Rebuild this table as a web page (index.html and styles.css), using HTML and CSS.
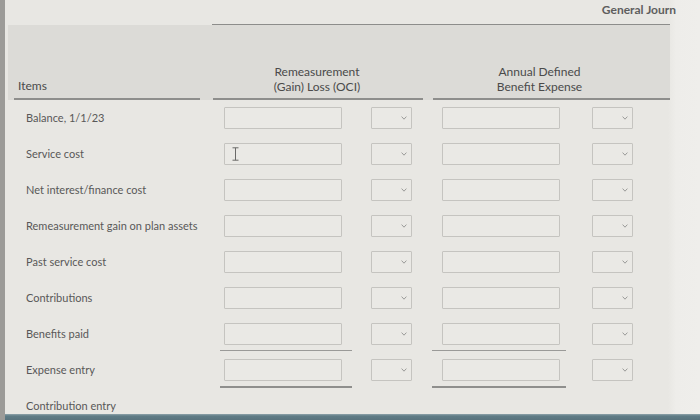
FILE: index.html
```html
<!DOCTYPE html>
<html lang="en">
<head>
    <meta charset="UTF-8">
    <meta name="viewport" content="width=device-width, initial-scale=1.0">
    <title>General Journal - Pension Worksheet</title>
    <link rel="stylesheet" href="styles.css">
</head>
<body>

<div class="topbar">
    <span class="title">General Journ</span>
</div>

<div class="sheet">
    <div class="head">
        <div class="hcell items">Items</div>
        <div class="hcell oci">Remeasurement<br>(Gain) Loss (OCI)</div>
        <div class="hcell expense">Annual Defined<br>Benefit Expense</div>
    </div>

    <div id="rows">
        <!-- rows are built below -->
    </div>
</div>

<div class="screen-edge"></div>

<script>
    const items = [
        "Balance, 1/1/23",
        "Service cost",
        "Net interest/finance cost",
        "Remeasurement gain on plan assets",
        "Past service cost",
        "Contributions",
        "Benefits paid",
        "Expense entry",
        "Contribution entry"
    ];

    const chevron = `<svg class="chev" width="6" height="4" viewBox="0 0 6 4"><path d="M0.6 0.6 L3 3.2 L5.4 0.6" fill="none" stroke="#9a9a98" stroke-width="1"/></svg>`;

    function buildRows() {
        let rows = document.getElementById("rows");
        items.forEach((name, index) => {
            let row = document.createElement("div");
            row.className = "row";
            if (index === 6) row.className += " sum";
            if (index === 7) row.className += " sum total";
            if (index === 8) row.className += " last";

            if (index === 8) {
                row.innerHTML = `<div class="label">${name}</div>`;
            } else {
                row.innerHTML = `
                    <div class="label">${name}</div>
                    <div class="cell c1"><input class="field" type="text"></div>
                    <div class="cell c2"><span class="pick">${chevron}</span></div>
                    <div class="cell c3"><input class="field" type="text"></div>
                    <div class="cell c4"><span class="pick">${chevron}</span></div>
                `;
            }
            rows.appendChild(row);
        });

        // mouse pointer resting in the service cost box
        let cursor = document.createElement("div");
        cursor.className = "ibeam";
        cursor.innerHTML = `<svg width="7" height="14" viewBox="0 0 7 14"><path d="M0.5 0.8 H6.5 M3.5 0.8 V13.2 M0.5 13.2 H6.5" fill="none" stroke="#6a6a68" stroke-width="1"/></svg>`;
        rows.children[1].querySelector(".c1").appendChild(cursor);
    }

    buildRows();
</script>

</body>
</html>
```

FILE: styles.css
```css
body {
    font-family: Lato, "Open Sans", Arial, sans-serif;
    margin: 0;
    width: 695px;
    height: 420px;
    overflow: hidden;
    background: linear-gradient(to right, #e8e7e3 0, #e8e7e3 668px, #eeedea 676px, #efeeeb 100%);
    border-left: 5px solid #9c9b98;
    color: #555;
}
.topbar {
    width: 458px;
    height: 24px;
    margin-left: 207px;
    border-bottom: 1px solid #8d8d8b;
    display: flex;
    justify-content: flex-end;
    align-items: flex-start;
}
.title {
    font-size: 12px;
    font-weight: 700;
    color: #5e5e5e;
    white-space: nowrap;
    margin-right: -6px;
    margin-top: 2px;
}
.sheet {
    width: 662px;
    margin-left: 3px;
}
.head {
    display: grid;
    grid-template-columns: 204px 148px 68px 152px 90px;
    height: 75px;
    background-color: #dcdbd7;
}
.hcell {
    display: flex;
    flex-direction: column;
    justify-content: flex-end;
    border-bottom: 2px solid #8e8e8c;
    font-size: 12px;
    line-height: 15px;
    color: #4a4a4a;
    padding-bottom: 4px;
}
.items {
    margin: 0 12px 0 6px;
    padding-left: 4px;
    padding-bottom: 5px;
}
.oci {
    grid-column: 2 / 4;
    margin: 0 5px 0 1px;
    text-align: center;
    padding-right: 2px;
}
.expense {
    grid-column: 4 / 6;
    margin-left: 5px;
    text-align: center;
    padding-right: 24px;
}
.row {
    display: grid;
    grid-template-columns: 204px 148px 68px 152px 90px;
    height: 36px;
}
.row.last {
    height: 26px;
}
.label {
    padding: 7px 0 0 18px;
    font-size: 11px;
    line-height: 22px;
    color: #585858;
    white-space: nowrap;
}
.cell {
    padding-top: 7px;
    height: 34px;
    box-sizing: border-box;
    position: relative;
}
.c1 {
    padding-left: 12px;
}
.c2 {
    padding-left: 11px;
}
.c3 {
    padding-left: 14px;
}
.c4 {
    padding-left: 12px;
}
.sum .c1 {
    margin: 0 8px;
    padding-left: 4px;
    border-bottom: 1px solid #9a9a98;
    height: 35px;
}
.sum .c3 {
    margin: 0 14px 0 4px;
    padding-left: 10px;
    border-bottom: 1px solid #9a9a98;
    height: 35px;
}
.total .c1, .total .c3 {
    border-bottom: 2px solid #8f8f8d;
    height: 36px;
}
.field {
    display: block;
    width: 118px;
    height: 22px;
    box-sizing: border-box;
    margin: 0;
    padding: 0 4px;
    border: 1px solid #c5c4c0;
    border-radius: 1px;
    background-color: #eae9e5;
    font-family: inherit;
    font-size: 11px;
    outline: none;
}
.pick {
    display: flex;
    align-items: center;
    justify-content: flex-end;
    width: 41px;
    height: 22px;
    box-sizing: border-box;
    padding-right: 4px;
    border: 1px solid #c5c4c0;
    border-radius: 1px;
    background-color: #eae9e5;
}
.ibeam {
    position: absolute;
    left: 20px;
    top: 11px;
    line-height: 0;
}
.screen-edge {
    height: 6px;
    margin-left: -5px;
    width: 700px;
    background: linear-gradient(to bottom, #8fa3aa 0, #5f7c86 2px, #58737d 100%);
}
```
